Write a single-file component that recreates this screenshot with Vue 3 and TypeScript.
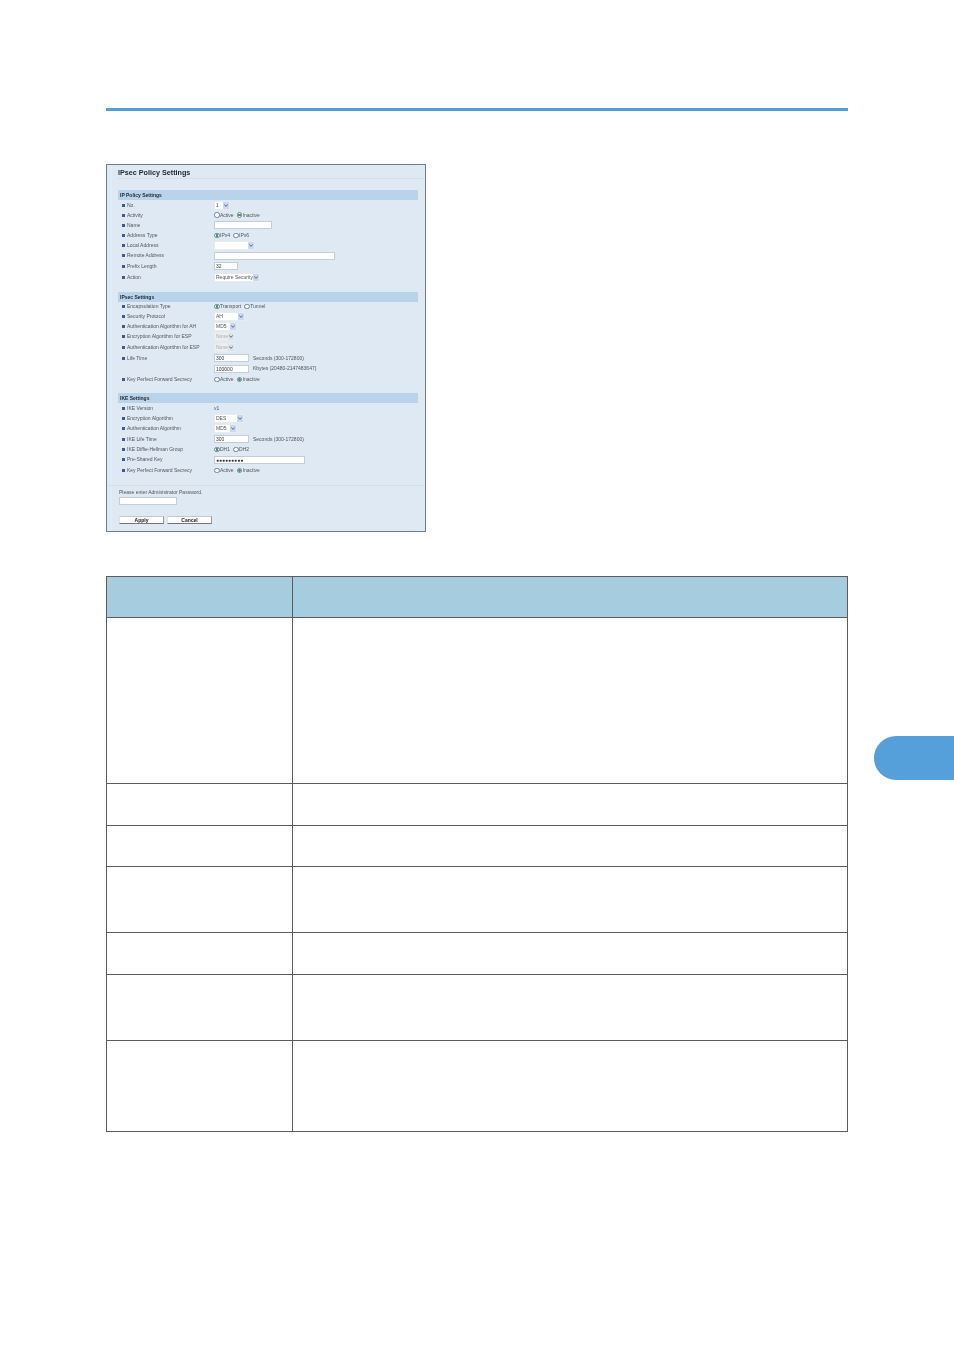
<script setup lang="ts">
type Control =
  | { kind: 'select'; value: string; width: number; disabled?: boolean }
  | { kind: 'input'; value: string; width: number; note?: string }
  | { kind: 'radio'; options: string[]; checked: number }
  | { kind: 'text'; value: string }
  | { kind: 'none' }

interface Row { label: string; height: number; control: Control }
interface Section { title: string; top: number; rows: Row[] }

const sections: Section[] = [
  {
    title: 'IP Policy Settings',
    top: 11,
    rows: [
      { label: 'No.', height: 10, control: { kind: 'select', value: '1', width: 16 } },
      { label: 'Activity', height: 10, control: { kind: 'radio', options: ['Active', 'Inactive'], checked: 1 } },
      { label: 'Name', height: 10.5, control: { kind: 'input', value: '', width: 58 } },
      { label: 'Address Type', height: 10, control: { kind: 'radio', options: ['IPv4', 'IPv6'], checked: 0 } },
      { label: 'Local Address', height: 10, control: { kind: 'select', value: '', width: 41 } },
      { label: 'Remote Address', height: 10.5, control: { kind: 'input', value: '', width: 121 } },
      { label: 'Prefix Length', height: 10.5, control: { kind: 'input', value: '32', width: 24 } },
      { label: 'Action', height: 11, control: { kind: 'select', value: 'Require Security', width: 46 } },
    ],
  },
  {
    title: 'IPsec Settings',
    top: 9,
    rows: [
      { label: 'Encapsulation Type', height: 10, control: { kind: 'radio', options: ['Transport', 'Tunnel'], checked: 0 } },
      { label: 'Security Protocol', height: 9.5, control: { kind: 'select', value: 'AH', width: 31 } },
      { label: 'Authentication Algorithm for AH', height: 10.5, control: { kind: 'select', value: 'MD5', width: 23 } },
      { label: 'Encryption Algorithm for ESP', height: 10.5, control: { kind: 'select', value: 'None', width: 21, disabled: true } },
      { label: 'Authentication Algorithm for ESP', height: 10.5, control: { kind: 'select', value: 'None', width: 21, disabled: true } },
      { label: 'Life Time', height: 11, control: { kind: 'input', value: '300', width: 35, note: 'Seconds (300-172800)' } },
      { label: '', height: 10.5, control: { kind: 'input', value: '100000', width: 35, note: 'Kbytes (20480-2147483647)' } },
      { label: 'Key Perfect Forward Secrecy', height: 10.5, control: { kind: 'radio', options: ['Active', 'Inactive'], checked: 1 } },
    ],
  },
  {
    title: 'IKE Settings',
    top: 8,
    rows: [
      { label: 'IKE Version', height: 11, control: { kind: 'text', value: 'v1' } },
      { label: 'Encryption Algorithm', height: 10, control: { kind: 'select', value: 'DES', width: 30 } },
      { label: 'Authentication Algorithm', height: 10.5, control: { kind: 'select', value: 'MD5', width: 23 } },
      { label: 'IKE Life Time', height: 10.5, control: { kind: 'input', value: '300', width: 35, note: 'Seconds (300-172800)' } },
      { label: 'IKE Diffie-Hellman Group', height: 10, control: { kind: 'radio', options: ['DH1', 'DH2'], checked: 0 } },
      { label: 'Pre-Shared Key', height: 10.5, control: { kind: 'input', value: '●●●●●●●●●', width: 91 } },
      { label: 'Key Perfect Forward Secrecy', height: 10.5, control: { kind: 'radio', options: ['Active', 'Inactive'], checked: 1 } },
    ],
  },
]

const tableRows: number[] = [166, 42, 41, 66, 42, 66, 91]
</script>

<template>
  <div class="page">
    <div class="rule"></div>

    <div class="panel">
      <div class="panel-title">IPsec Policy Settings</div>

      <div
        v-for="section in sections"
        :key="section.title"
        class="section"
        :style="{ marginTop: section.top + 'px' }"
      >
        <div class="section-bar">{{ section.title }}</div>
        <div class="section-rows">
          <div
            v-for="(row, i) in section.rows"
            :key="i"
            class="form-row"
            :style="{ height: row.height + 'px' }"
          >
            <div class="label">
              <span v-if="row.label" class="bullet"></span>
              <span>{{ row.label }}</span>
            </div>

            <div class="control">
              <template v-if="row.control.kind === 'select'">
                <div
                  class="select"
                  :class="{ disabled: row.control.disabled }"
                  :style="{ width: row.control.width + 'px' }"
                >
                  <span class="select-value">{{ row.control.value }}</span>
                  <span class="select-arrow">
                    <svg width="4" height="3" viewBox="0 0 4 3">
                      <path d="M0.3 0.4 L2 2.4 L3.7 0.4" fill="none" stroke="#3d5f96" stroke-width="0.9" />
                    </svg>
                  </span>
                </div>
              </template>

              <template v-else-if="row.control.kind === 'input'">
                <div class="input" :style="{ width: row.control.width + 'px' }">{{ row.control.value }}</div>
                <span v-if="row.control.note" class="note">{{ row.control.note }}</span>
              </template>

              <template v-else-if="row.control.kind === 'radio'">
                <span v-for="(option, j) in row.control.options" :key="option" class="radio-option">
                  <span class="radio" :class="{ on: row.control.checked === j }"></span>
                  <span>{{ option }}</span>
                </span>
              </template>

              <span v-else-if="row.control.kind === 'text'">{{ row.control.value }}</span>
            </div>
          </div>
        </div>
      </div>

      <div class="panel-footer">
        <div class="prompt">Please enter Administrator Password.</div>
        <div class="input password"></div>
        <div class="buttons">
          <div class="button">Apply</div>
          <div class="button">Cancel</div>
        </div>
      </div>
    </div>

    <table class="table">
      <colgroup>
        <col class="col-a" />
        <col />
      </colgroup>
      <thead>
        <tr class="head-row">
          <th></th>
          <th></th>
        </tr>
      </thead>
      <tbody>
        <tr v-for="(height, i) in tableRows" :key="i" :style="{ height: height + 'px' }">
          <td></td>
          <td></td>
        </tr>
      </tbody>
    </table>

    <div class="chapter-tab"></div>
  </div>
</template>

<style>
html,
body {
  margin: 0;
  background: #ffffff;
}
</style>

<style scoped>
.page {
  position: relative;
  width: 954px;
  height: 1353px;
  padding: 108px 106px 0;
  box-sizing: border-box;
  overflow: hidden;
  background: #ffffff;
  font-family: "Liberation Sans", Arial, sans-serif;
}

.rule {
  height: 3px;
  background: #529fdc;
}

.panel {
  width: 320px;
  height: 368px;
  margin-top: 53px;
  padding: 0 7px 0 11px;
  box-sizing: border-box;
  border: 1px solid #6f7f8c;
  background: #dfe9f3;
  font-size: 5px;
  line-height: 7px;
  color: #50555b;
  filter: blur(0.3px);
}

.panel-title {
  height: 14px;
  margin-right: -7px;
  padding: 3px 0 0;
  box-sizing: border-box;
  border-bottom: 1px solid #d3e0eb;
  font-size: 7.2px;
  line-height: 9px;
  font-weight: 700;
  color: #1d2530;
}

.section-bar {
  height: 10px;
  padding-left: 2px;
  background: #b9d4ea;
  font-size: 5px;
  line-height: 10px;
  font-weight: 700;
  color: #1d2530;
}

.section-rows {
  display: flex;
  flex-direction: column;
}

.form-row {
  display: flex;
  align-items: center;
}

.label {
  display: flex;
  align-items: center;
  gap: 2px;
  width: 96px;
  padding-left: 4px;
  box-sizing: border-box;
  white-space: nowrap;
}

.bullet {
  width: 3px;
  height: 3px;
  flex: none;
  background: #3f5a8a;
}

.control {
  display: flex;
  align-items: center;
  gap: 3px;
  white-space: nowrap;
}

.select {
  display: flex;
  align-items: center;
  justify-content: space-between;
  height: 9px;
  box-sizing: border-box;
  background: #ffffff;
  border: 1px solid #e8ecef;
}

.select-value {
  padding-left: 1px;
  overflow: hidden;
}

.select-arrow {
  display: flex;
  align-items: center;
  justify-content: center;
  width: 6px;
  height: 7px;
  flex: none;
  background: #c9d9ee;
}

.select.disabled {
  background: #eceef0;
  color: #a9adb1;
}

.select.disabled .select-arrow {
  background: #dfe2e5;
}

.input {
  height: 8px;
  padding-left: 1px;
  box-sizing: border-box;
  background: #ffffff;
  border: 1px solid #c3ced8;
  line-height: 6px;
  overflow: hidden;
  color: #33383d;
}

.note {
  margin-left: 1px;
}

.radio-option {
  display: inline-flex;
  align-items: center;
  gap: 0.5px;
}

.radio {
  width: 5.5px;
  height: 5.5px;
  box-sizing: border-box;
  border: 0.6px solid #6c8296;
  border-radius: 50%;
  background: #ffffff;
}

.radio.on {
  background: radial-gradient(circle, #39a356 0 1.1px, #ffffff 1.5px);
}

.panel-footer {
  margin: 9px -7px 0 -11px;
  padding: 3px 0 0 12px;
  border-top: 1px solid #d3e0eb;
}

.prompt {
  height: 8px;
}

.password {
  width: 58px;
  height: 8px;
}

.buttons {
  display: flex;
  gap: 3px;
  margin-top: 11px;
}

.button {
  width: 45px;
  height: 8px;
  box-sizing: border-box;
  background: #ffffff;
  border-top: 1px solid #c8c8c8;
  border-bottom: 1px solid #777777;
  border-right: 1px solid #999999;
  border-left: 1px solid #e2e2e2;
  text-align: center;
  line-height: 6px;
  font-size: 5px;
  font-weight: 700;
  color: #222222;
}

.table {
  width: 742px;
  margin-top: 44px;
  border-collapse: collapse;
  table-layout: fixed;
}

.col-a {
  width: 186px;
}

.table th,
.table td {
  padding: 0;
  border: 1px solid #5a5c5e;
}

.head-row {
  height: 41px;
}

.head-row th {
  background: #a6cddf;
}

.chapter-tab {
  position: absolute;
  top: 736px;
  right: 0;
  width: 80px;
  height: 44px;
  border-radius: 22px 0 0 22px;
  background: #559fdb;
}
</style>
